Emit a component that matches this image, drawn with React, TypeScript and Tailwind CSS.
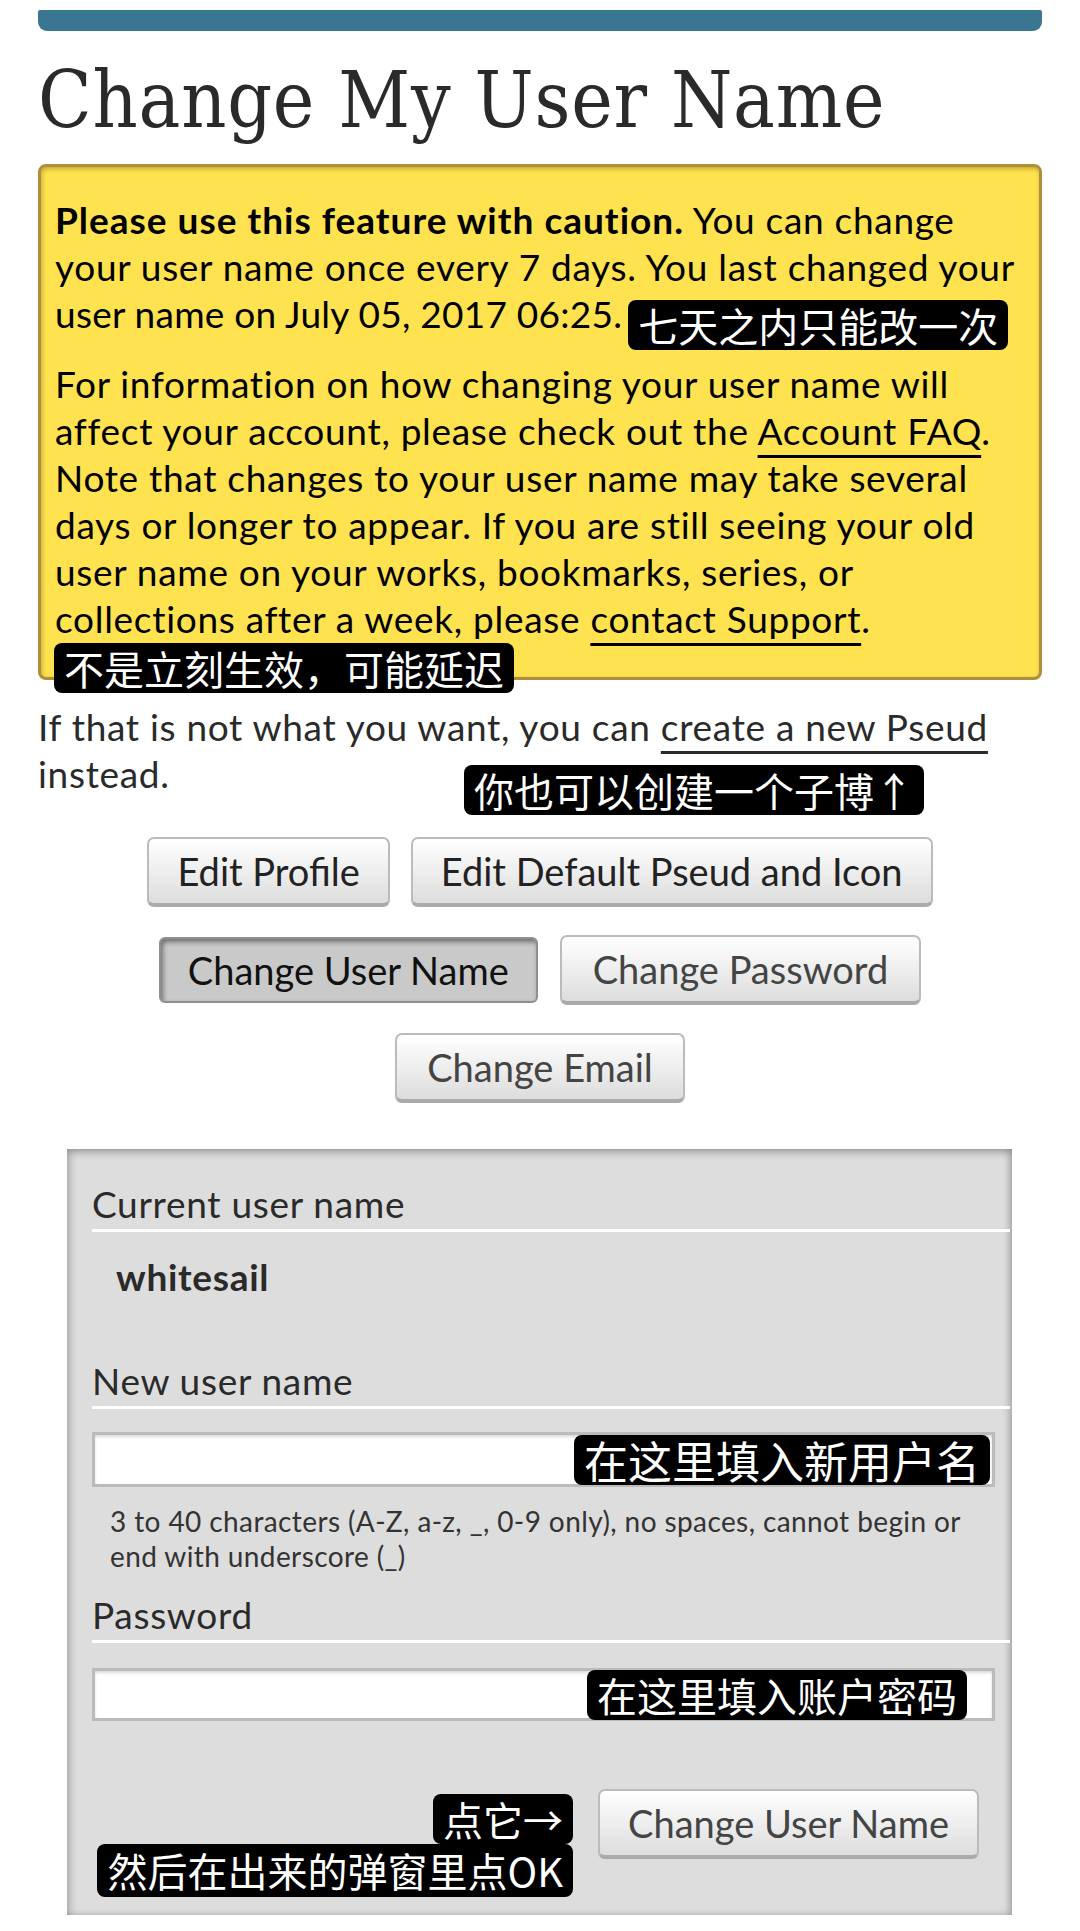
import React from "react";

const tag =
  "bg-black text-white rounded-[8px] px-[10px] text-[40px] leading-[50px] h-[50px] whitespace-nowrap tracking-normal font-['Noto_Sans_CJK_SC',sans-serif]";

const btn =
  "h-[70px] px-[28px] rounded-[7px] border-2 border-b-[4px] border-[#bbbbbb] border-b-[#aaaaaa] bg-[linear-gradient(#ffffff,#dddddd)] text-[38px] leading-none whitespace-nowrap";

const link = "underline decoration-[3px] underline-offset-[10px]";

export default function App() {
  return (
    <div className="w-[1080px] h-[1931px] bg-white overflow-hidden font-['Lato','Noto_Sans_CJK_SC',sans-serif] text-[#2a2a2a]">
      <div className="px-[38px] pt-[10px]">
        <div className="h-[21px] bg-[#3a7592] rounded-b-[9px] rounded-t-[2px]" />
        <h2 className="mt-[30px] font-['DejaVu_Serif_Condensed','DejaVu_Serif',serif] text-[78px] tracking-[0.8px] leading-[78px] text-[#2a2a2a] whitespace-nowrap">
          Change My User Name
        </h2>

        <div className="relative mt-[25px] border-[3px] border-[#ad8e3b] rounded-[8px] bg-[#fee24f] shadow-[inset_1px_2px_4px_rgba(90,60,0,0.35)] pt-[29px] pb-[35px] px-[14px] text-[37px] tracking-[0.7px] leading-[47px] text-black">
          <p className="whitespace-nowrap">
            <strong className="font-bold tracking-[1px]">Please use this feature with caution.</strong> You can change
            <br />
            your user name once every 7 days. You last changed your
            <br />
            <span className="tracking-[0.25px]">user name on July 05, 2017 06:25.</span>
            <span className={`${tag} inline-block align-top relative top-[10px] -mb-[3px] ml-[6px]`}>
              七天之内只能改一次
            </span>
          </p>
          <p className="mt-[23px] whitespace-nowrap">
            For information on how changing your user name will
            <br />
            affect your account, please check out the <a className={link}>Account FAQ</a>.
            <br />
            Note that changes to your user name may take several
            <br />
            days or longer to appear. If you are still seeing your old
            <br />
            user name on your works, bookmarks, series, or
            <br />
            collections after a week, please <a className={link}>contact Support</a>.
          </p>
          <div className={`${tag} absolute left-[13px] top-[476px]`}>不是立刻生效，可能延迟</div>
        </div>

        <p className="relative mt-[23px] text-[37px] tracking-[0.7px] leading-[47px] whitespace-nowrap">
          If that is not what you want, you can <a className={link}>create a new Pseud</a>
          <br />
          instead.
          <span className={`${tag} absolute left-[426px] top-[62px]`}>你也可以创建一个子博↑</span>
        </p>

        <div className="mt-[40px] flex flex-col items-center gap-[28px]">
          <div className="flex gap-[21px]">
            <button className={`${btn} text-[#222]`}>Edit Profile</button>
            <button className={`${btn} text-[#222]`}>Edit Default Pseud and Icon</button>
          </div>
          <div className="flex gap-[22px] items-center">
            <button className="h-[66px] px-[27px] rounded-[6px] border-2 border-[#8f8f8f] bg-[#c9c9c9] shadow-[inset_2px_3px_5px_rgba(0,0,0,0.45)] text-[38px] leading-none text-[#111] whitespace-nowrap">
              Change User Name
            </button>
            <button className={`${btn} px-[31px] text-[#444]`}>Change Password</button>
          </div>
          <div className="flex">
            <button className={`${btn} px-[30px] text-[#444]`}>Change Email</button>
          </div>
        </div>
      </div>

      <div className="relative mt-[46px] ml-[67px] w-[945px] h-[766px] bg-[#dddddd] shadow-[inset_2px_3px_9px_rgba(0,0,0,0.28),inset_-4px_0_6px_rgba(0,0,0,0.15)] pt-[31px] pl-[25px] pr-[2px] text-[37px] tracking-[0.7px] leading-[47px] text-[#2a2a2a]">
        <div className="pb-[2px] border-b-[3px] border-white">Current user name</div>
        <div className="mt-[21px] pl-[24px] font-bold">whitesail</div>

        <div className="mt-[57px] pb-[2px] border-b-[3px] border-white">New user name</div>
        <div className="relative mt-[23px] w-[903px] h-[55px] bg-white border-[3px] border-[#bbbbbb] shadow-[inset_0_2px_3px_rgba(0,0,0,0.15)]">
          <span className={`${tag} absolute left-[479px] top-0 text-[44px] px-[8px]`}>在这里填入新用户名</span>
        </div>
        <p className="mt-[17px] pl-[18px] text-[28px] tracking-[0.4px] leading-[35px] text-[#333]">
          3 to 40 characters (A-Z, a-z, _, 0-9 only), no spaces, cannot begin or
          <br />
          end with underscore (_)
        </p>

        <div className="mt-[17px] pb-[2px] border-b-[3px] border-white">Password</div>
        <div className="relative mt-[25px] w-[903px] h-[53px] bg-white border-[3px] border-[#bbbbbb] shadow-[inset_0_2px_3px_rgba(0,0,0,0.15)]">
          <span className={`${tag} absolute left-[492px] -top-[1px]`}>在这里填入账户密码</span>
        </div>

        <div className="mt-[68px] flex justify-end pr-[31px]">
          <button className={`${btn} text-[#444] tracking-normal`}>Change User Name</button>
        </div>

        <div className="absolute right-[439px] top-[645px] flex flex-col items-end">
          <span className={`${tag} h-[46px] leading-[46px]`}>点它→</span>
          <span className={`${tag} h-[53px] leading-[53px]`}>然后在出来的弹窗里点OK</span>
        </div>
      </div>
    </div>
  );
}
